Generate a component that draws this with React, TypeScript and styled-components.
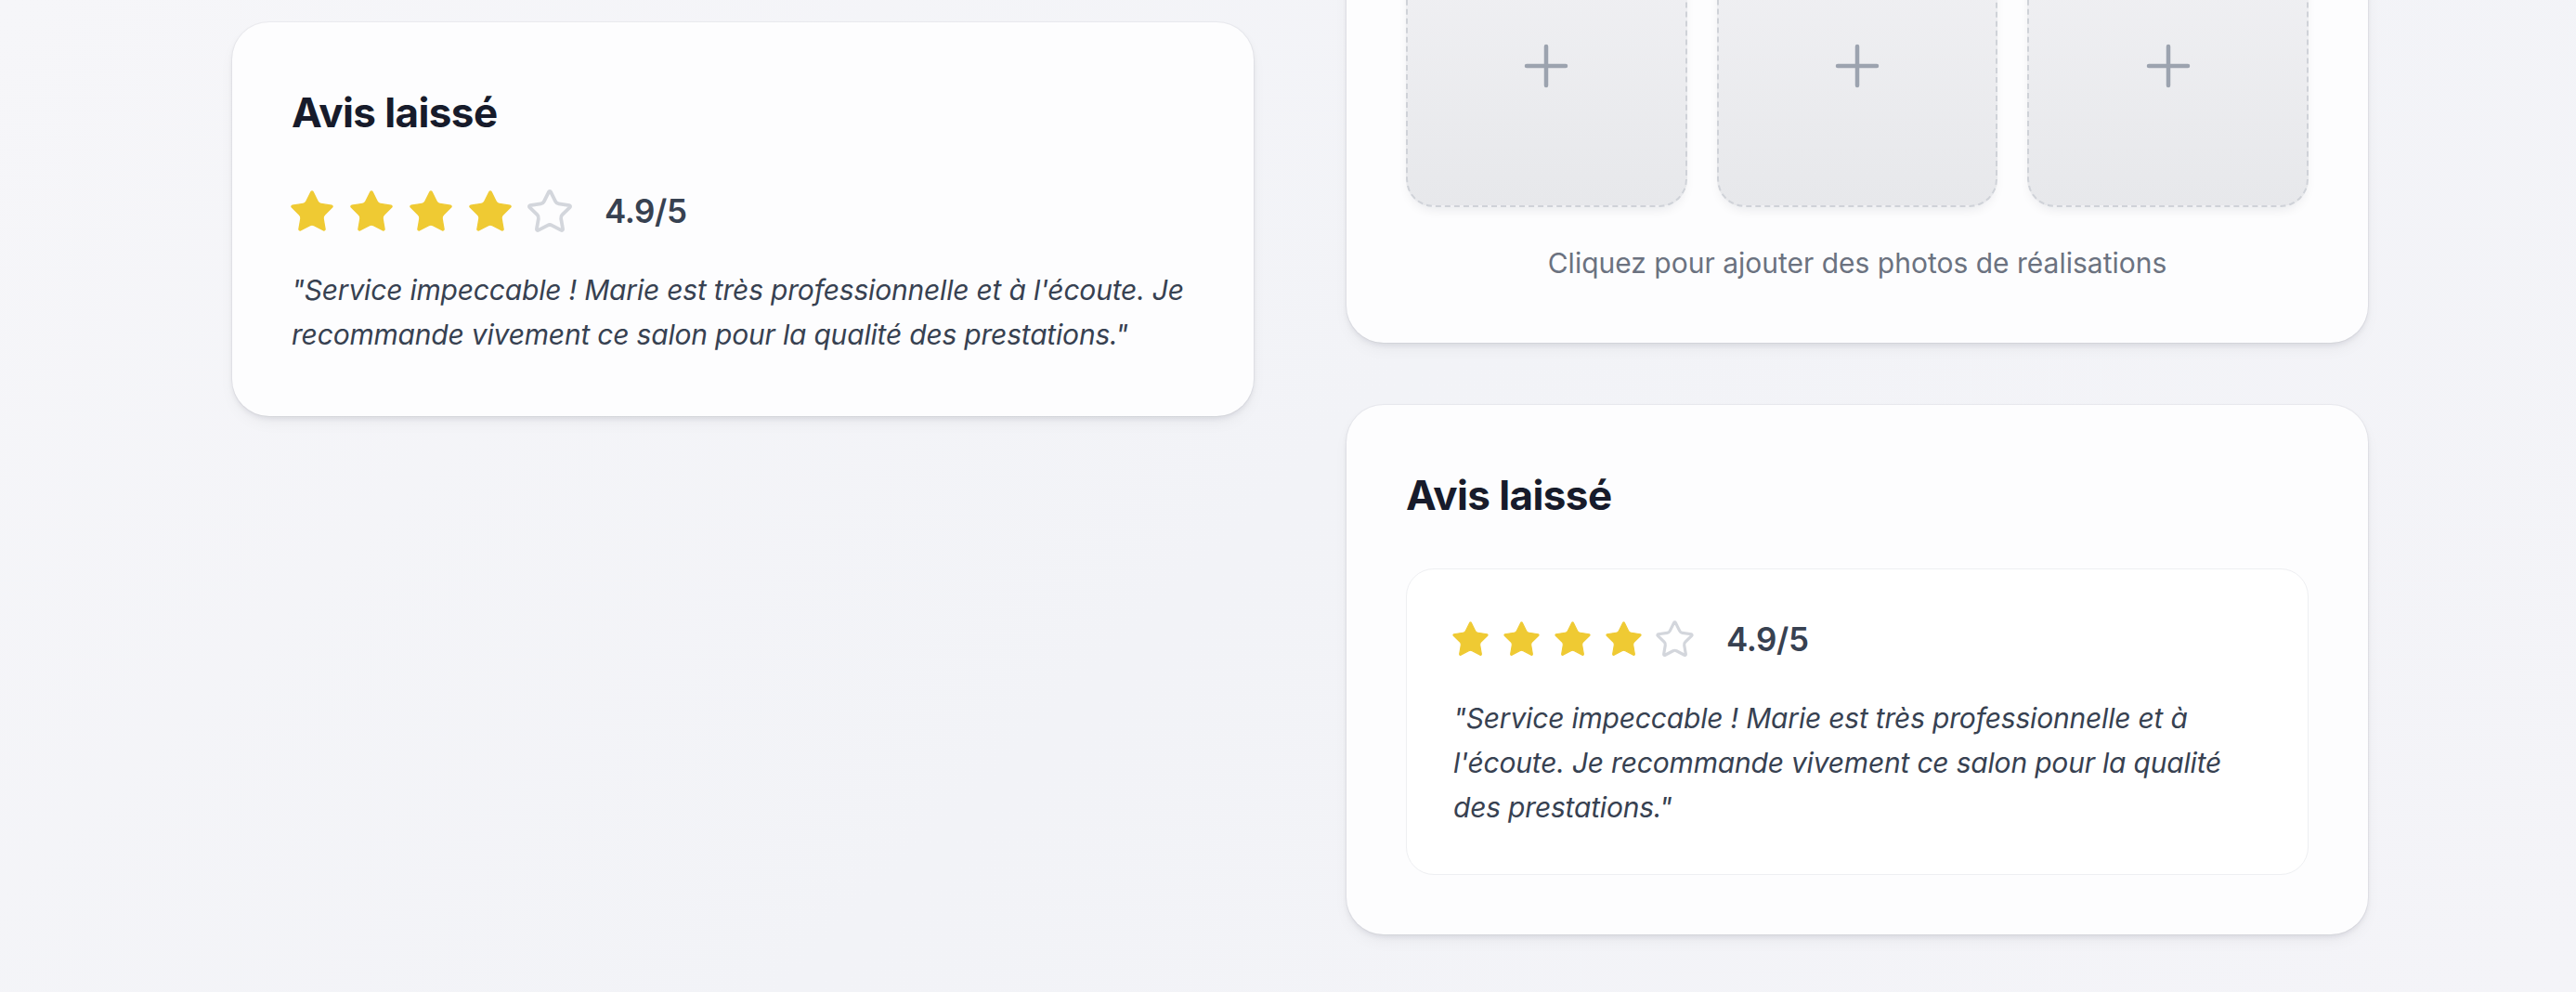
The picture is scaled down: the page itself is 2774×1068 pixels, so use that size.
import React from "react";
import styled, { createGlobalStyle } from "styled-components";

const GlobalStyle = createGlobalStyle`
  html, body {
    margin: 0;
    padding: 0;
    overflow: hidden;
  }
  body {
    font-family: Inter, "Noto Sans", "Liberation Sans", sans-serif;
    -webkit-font-smoothing: antialiased;
  }
  * { box-sizing: border-box; }
`;

const Page = styled.div`
  min-height: 100vh;
  width: 100%;
  background: linear-gradient(135deg, #f6f6f9 0%, #f2f3f7 50%, #f4f4f8 100%);
  display: grid;
  grid-template-columns: 1100px 1100px;
  column-gap: 100px;
  align-items: start;
  padding-left: 250px;
`;

const Column = styled.div<{ $offset: number }>`
  display: flex;
  flex-direction: column;
  gap: 67px;
  margin-top: ${(p) => p.$offset}px;
`;

const Card = styled.section`
  background: #fdfdfe;
  border-radius: 40px;
  padding: 64px;
  box-shadow: 0 0 0 1px rgba(17, 24, 39, 0.04),
    0 3px 6px -1px rgba(17, 24, 39, 0.09),
    0 8px 20px -6px rgba(17, 24, 39, 0.08);
`;

const Title = styled.h2`
  margin: 0 0 46px;
  font-size: 44px;
  line-height: 66px;
  font-weight: 700;
  letter-spacing: -0.6px;
  color: #171b2b;
`;

const ReviewBox = styled.div`
  background: #ffffff;
  border: 1px solid #eeeff2;
  border-radius: 30px;
  padding: 48px 48px 48px 50px;
`;

const RatingRow = styled.div`
  display: flex;
  align-items: center;
  gap: 37px;
  height: 54px;
  margin-bottom: 34px;
`;

const StarGroup = styled.div<{ $gap: number }>`
  display: flex;
  align-items: center;
  gap: ${(p) => p.$gap}px;
`;

const StarSvg = styled.svg`
  display: block;
  overflow: visible;
  flex: none;
`;

const Score = styled.span`
  font-size: 35px;
  line-height: 54px;
  font-weight: 600;
  color: #374151;
  letter-spacing: -0.4px;
`;

const Quote = styled.p`
  margin: 0;
  font-size: 30px;
  line-height: 48px;
  font-style: italic;
  letter-spacing: -0.2px;
  color: #374151;
`;

const SlotGrid = styled.div`
  display: grid;
  grid-template-columns: repeat(3, 1fr);
  gap: 32px;
`;

const Slot = styled.button`
  aspect-ratio: 1 / 1;
  border: 2px dashed #cfd2d8;
  border-radius: 30px;
  background: linear-gradient(180deg, #f1f1f4 0%, #e7e8eb 100%);
  display: flex;
  align-items: center;
  justify-content: center;
  padding: 0;
  cursor: pointer;
  box-shadow: 0 6px 14px -6px rgba(17, 24, 39, 0.12);
`;

const Caption = styled.p`
  margin: 38px 0 0;
  text-align: center;
  font-size: 30px;
  line-height: 44px;
  color: #6b7280;
`;

const STAR_PATH =
  "M11.525 2.295a.53.53 0 0 1 .95 0l2.31 4.679a2.123 2.123 0 0 0 1.595 1.16l5.166.756a.53.53 0 0 1 .294.904l-3.736 3.638a2.123 2.123 0 0 0-.611 1.878l.882 5.14a.53.53 0 0 1-.771.56l-4.618-2.428a2.122 2.122 0 0 0-1.973 0L6.396 21.01a.53.53 0 0 1-.77-.56l.881-5.139a2.122 2.122 0 0 0-.611-1.879L2.16 9.795a.53.53 0 0 1 .294-.906l5.165-.755a2.122 2.122 0 0 0 1.597-1.16z";

const Star = ({ filled, size }: { filled: boolean; size: number }) => (
  <StarSvg
    width={size}
    height={size * 0.96}
    viewBox="2.05 2.05 19.9 19.1"
    aria-hidden="true"
  >
    <path
      d={STAR_PATH}
      fill={filled ? "#efca33" : "none"}
      stroke={filled ? "#efca33" : "#d3d6dc"}
      strokeWidth={filled ? 0.6 : 1.7}
      strokeLinejoin="round"
    />
  </StarSvg>
);

const Rating = ({
  value,
  score,
  size,
  gap,
}: {
  value: number;
  score: string;
  size: number;
  gap: number;
}) => (
  <RatingRow>
    <StarGroup $gap={gap}>
      {[1, 2, 3, 4, 5].map((i) => (
        <Star key={i} filled={i <= value} size={size} />
      ))}
    </StarGroup>
    <Score>{score}</Score>
  </RatingRow>
);

const PlusIcon = () => (
  <svg
    width="72"
    height="72"
    viewBox="0 0 24 24"
    fill="none"
    stroke="#9ca3af"
    strokeWidth="1.5"
    strokeLinecap="round"
    aria-hidden="true"
  >
    <path d="M5 12h14" />
    <path d="M12 5v14" />
  </svg>
);

const QUOTE =
  "\"Service impeccable ! Marie est très professionnelle et à l'écoute. Je recommande vivement ce salon pour la qualité des prestations.\"";

export default function App() {
  return (
    <>
      <GlobalStyle />
      <Page>
        <Column $offset={24}>
          <Card>
            <Title>Avis laissé</Title>
            <Rating value={4} score="4.9/5" size={44} gap={20} />
            <Quote>{QUOTE}</Quote>
          </Card>
        </Column>
        <Column $offset={-144}>
          <Card>
            <SlotGrid>
              {[0, 1, 2].map((i) => (
                <Slot key={i} type="button" aria-label="Ajouter une photo">
                  <PlusIcon />
                </Slot>
              ))}
            </SlotGrid>
            <Caption>Cliquez pour ajouter des photos de réalisations</Caption>
          </Card>
          <Card>
            <Title>Avis laissé</Title>
            <ReviewBox>
              <Rating value={4} score="4.9/5" size={37} gap={18} />
              <Quote>{QUOTE}</Quote>
            </ReviewBox>
          </Card>
        </Column>
      </Page>
    </>
  );
}
